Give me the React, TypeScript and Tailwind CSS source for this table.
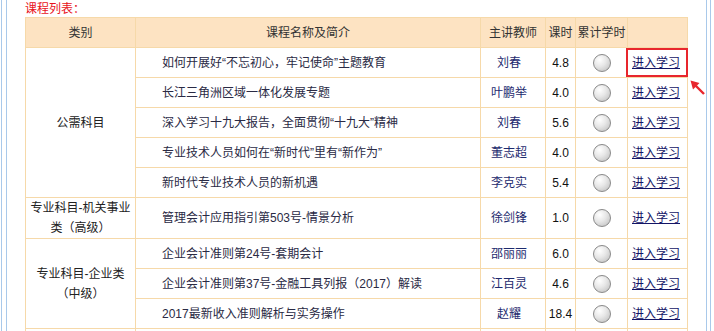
// 课程列表 (course list) table
const FONT = { fontFamily: '"Liberation Sans", "Noto Sans CJK SC", sans-serif' };

type Course = { name: string; teacher: string; hours: string };
type Group = { category: string[]; courses: Course[]; tall?: boolean };

const groups: Group[] = [
  {
    category: ['公需科目'],
    courses: [
      { name: '如何开展好“不忘初心，牢记使命”主题教育', teacher: '刘春', hours: '4.8' },
      { name: '长江三角洲区域一体化发展专题', teacher: '叶鹏举', hours: '4.0' },
      { name: '深入学习十九大报告，全面贯彻“十九大”精神', teacher: '刘春', hours: '5.6' },
      { name: '专业技术人员如何在“新时代”里有“新作为”', teacher: '董志超', hours: '4.0' },
      { name: '新时代专业技术人员的新机遇', teacher: '李克实', hours: '5.4' },
    ],
  },
  {
    category: ['专业科目-机关事业', '类（高级）'],
    tall: true,
    courses: [{ name: '管理会计应用指引第503号-情景分析', teacher: '徐剑锋', hours: '1.0' }],
  },
  {
    category: ['专业科目-企业类', '（中级）'],
    courses: [
      { name: '企业会计准则第24号-套期会计', teacher: '邵丽丽', hours: '6.0' },
      { name: '企业会计准则第37号-金融工具列报（2017）解读', teacher: '江百灵', hours: '4.6' },
      { name: '2017最新收入准则解析与实务操作', teacher: '赵耀', hours: '18.4' },
    ],
  },
];

function Radio() {
  return (
    <span className="inline-block w-[18px] h-[18px] rounded-full border border-[#8a8a8a] bg-[radial-gradient(circle_at_35%_30%,#ffffff_0%,#e6e6e6_45%,#b9b9b9_100%)] align-middle" />
  );
}

const td = 'border border-[#f6d9a9] text-[12px]';

export default function App() {
  let first = true;
  return (
    <div className="w-[714px] h-[331px] overflow-hidden bg-white relative" style={FONT}>
      {/* 左侧边框 */}
      <div className="absolute left-[1px] top-0 bottom-0 w-[6px] border-l border-r border-[#a9c9ea]" />
      {/* 右侧边框 */}
      <div className="absolute left-[706px] top-0 bottom-0 w-[5px] border-l border-r border-[#a9c9ea]" />

      <div className="pl-[25px]">
        <div className="h-[17px] pt-[2px] text-[12px] leading-[15px] text-[#e8121b]">课程列表：</div>
        <table className="table-fixed border-collapse w-[663px]">
          <colgroup>
            <col className="w-[110px]" />
            <col className="w-[345px]" />
            <col className="w-[65px]" />
            <col className="w-[30px]" />
            <col className="w-[52px]" />
            <col className="w-[60px]" />
          </colgroup>
          <thead>
            <tr className="h-[30px] bg-[#fde3c2] text-[#333]">
              <th className={`${td} font-normal`}>类别</th>
              <th className={`${td} font-normal`}>课程名称及简介</th>
              <th className={`${td} font-normal`}>主讲教师</th>
              <th className={`${td} font-normal`}>课时</th>
              <th className={`${td} font-normal whitespace-nowrap`}>累计学时</th>
              <th className={td}></th>
            </tr>
          </thead>
          <tbody>
            {groups.map((g) =>
              g.courses.map((c, i) => {
                const boxed = first;
                first = false;
                return (
                  <tr key={g.category[0] + c.name} className={g.tall ? 'h-[41px]' : 'h-[30px]'}>
                    {i === 0 && (
                      <td rowSpan={g.courses.length} className={`${td} text-center text-[#222] leading-[20px]`}>
                        {g.category.map((l) => (
                          <div key={l}>{l}</div>
                        ))}
                      </td>
                    )}
                    <td className={`${td} pl-[26px] text-[#2a2a44] whitespace-nowrap`}>{c.name}</td>
                    <td className={`${td} text-center text-[#1d2a6e] pr-[8px]`}>{c.teacher}</td>
                    <td className={`${td} text-center text-[#111]`}>{c.hours}</td>
                    <td className={`${td} text-center leading-none`}>
                      <Radio />
                    </td>
                    <td className={`${td} text-left pl-[4px] relative`}>
                      {boxed && (
                        <span className="absolute left-[-2px] top-[0px] w-[62px] h-[29px] border-2 border-[#e8262d]" />
                      )}
                      <a href="#" className="underline text-[#131466]">
                        进入学习
                      </a>
                    </td>
                  </tr>
                );
              })
            )}
            {/* 下一分类（截断） */}
            <tr className="h-[30px]">
              <td className={td}></td>
              <td className={td}></td>
              <td className={td}></td>
              <td className={td}></td>
              <td className={td}></td>
              <td className={td}></td>
            </tr>
          </tbody>
        </table>
      </div>

      {/* 红色箭头 */}
      <svg className="absolute left-[689px] top-[79px]" width="18" height="18" viewBox="0 0 18 18">
        <line x1="6" y1="6" x2="15" y2="15" stroke="#e8262d" strokeWidth="2.4" />
        <polygon points="1.5,1.5 10.5,4 4,10.5" fill="#e8262d" />
      </svg>
    </div>
  );
}
